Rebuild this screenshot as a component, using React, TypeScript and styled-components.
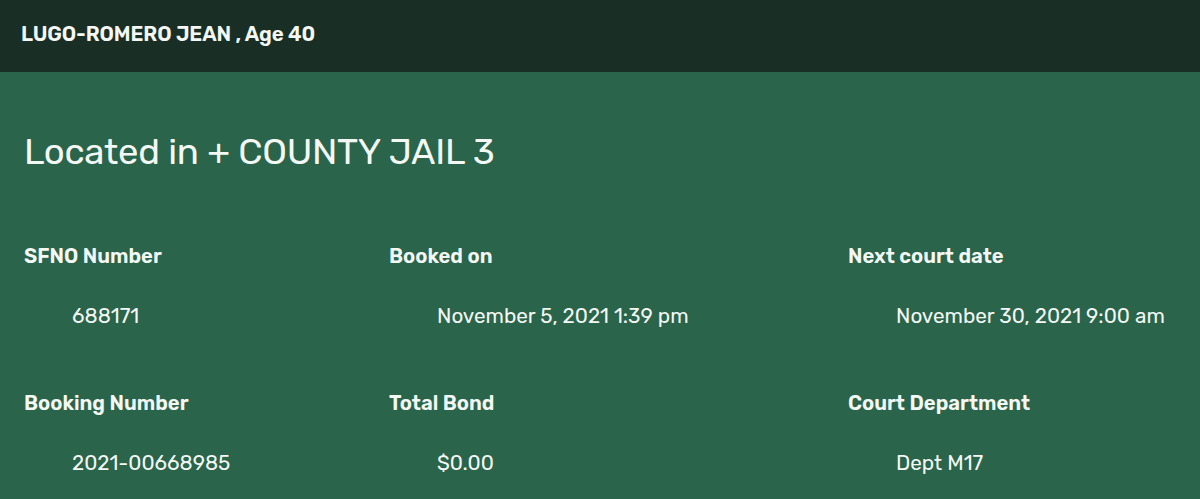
import React from "react";
import styled, { createGlobalStyle } from "styled-components";

const Global = createGlobalStyle`
  html, body { margin: 0; padding: 0; background: #2a644a; }
  body { font-family: Rubik, Inter, "Noto Sans", sans-serif; color: #f4f8f4; }
`;

const Header = styled.header`
  height: 72px;
  background: #192e24;
  display: flex;
  align-items: center;
  padding: 0 21px 4px;
  box-sizing: border-box;
  font-weight: 600;
  font-size: 20.5px;
  letter-spacing: -0.1px;
`;

const Main = styled.main`
  background: #2a644a;
  padding: 58px 24px 0;
  min-height: 427px;
  box-sizing: border-box;
`;

const Title = styled.h1`
  margin: 0;
  font-weight: 400;
  font-size: 36.5px;
  line-height: 44px;
  letter-spacing: -0.3px;
`;

const Grid = styled.div`
  display: grid;
  grid-template-columns: 365px 459px 1fr;
  margin-top: 68px;
  row-gap: 59px;
`;

const Field = styled.div`
  display: flex;
  flex-direction: column;
`;

const Label = styled.div`
  font-weight: 600;
  font-size: 20.3px;
  line-height: 28px;
`;

const Value = styled.div`
  font-weight: 400;
  font-size: 20.7px;
  line-height: 28px;
  padding-left: 48px;
  margin-top: 32px;
`;

const fields = [
  ["SFNO Number", "688171"],
  ["Booked on", "November 5, 2021 1:39 pm"],
  ["Next court date", "November 30, 2021 9:00 am"],
  ["Booking Number", "2021-00668985"],
  ["Total Bond", "$0.00"],
  ["Court Department", "Dept M17"],
];

export default function App() {
  return (
    <>
      <Global />
      <Header>LUGO-ROMERO JEAN , Age 40</Header>
      <Main>
        <Title>Located in + COUNTY JAIL 3</Title>
        <Grid>
          {fields.map(([l, v]) => (
            <Field key={l}>
              <Label>{l}</Label>
              <Value>{v}</Value>
            </Field>
          ))}
        </Grid>
      </Main>
    </>
  );
}
